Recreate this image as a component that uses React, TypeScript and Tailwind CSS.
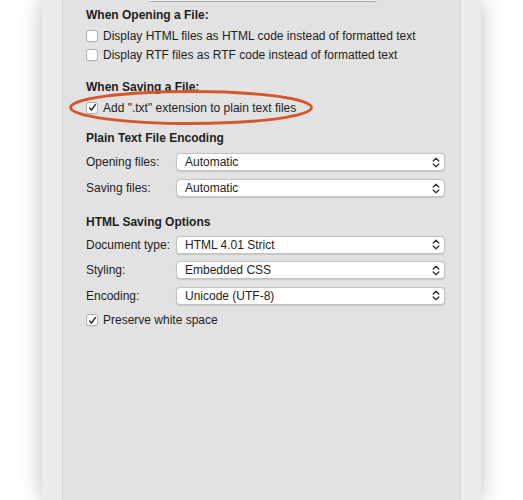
import React from "react";

function Checkbox({ checked }: { checked?: boolean }) {
  return (
    <span className="flex h-[12px] w-[12px] shrink-0 items-center justify-center rounded-[3px] border border-[#b0b0b0] bg-white shadow-[0_0.5px_0.5px_rgba(0,0,0,0.08)]">
      {checked && (
        <svg width="9" height="9" viewBox="0 0 9 9" fill="none">
          <path d="M1.6 4.9 L3.6 7 L7.4 1.6" stroke="#222" strokeWidth="1.4" strokeLinecap="round" strokeLinejoin="round" />
        </svg>
      )}
    </span>
  );
}

function CheckRow({ label, checked }: { label: string; checked?: boolean }) {
  return (
    <div className="flex h-[19px] items-center gap-[5px]">
      <Checkbox checked={checked} />
      <span className="whitespace-nowrap">{label}</span>
    </div>
  );
}

function Select({ label, value, tall }: { label: string; value: string; tall?: boolean }) {
  return (
    <div className={tall ? "flex h-[26px] items-center" : "flex h-[25.5px] items-center"}>
      <span className="w-[90px] shrink-0 whitespace-nowrap">{label}</span>
      <div className="flex h-[18px] w-[269px] items-center justify-between rounded-[4px] border border-[#c3c3c3] bg-white pl-[8px] pr-[4px] shadow-[0_0.5px_1px_rgba(0,0,0,0.12)]">
        <span>{value}</span>
        <svg width="8" height="11" viewBox="0 0 8 11" fill="none">
          <path d="M1.2 4 L4 1.2 L6.8 4 M1.2 7 L4 9.8 L6.8 7" stroke="#333" strokeWidth="1.3" strokeLinecap="round" strokeLinejoin="round" />
        </svg>
      </div>
    </div>
  );
}

function Heading({ children }: { children: React.ReactNode }) {
  return <div className="flex h-[18px] items-center font-bold">{children}</div>;
}

export default function App() {
  return (
    <div className="flex h-[500px] w-[523px] justify-center overflow-hidden bg-white">
      <div className="flex h-full w-[439px] bg-[#ececec] shadow-[0_0_20px_rgba(0,0,0,0.25)]">
        <div className="w-[20px] shrink-0" />
        <div
          className="relative w-[399px] shrink-0 border-x border-[#d6d6d6] bg-[#e2e2e2] pl-[23px] text-[12px] text-[#1e1e1e]"
          style={{ fontFamily: '"Liberation Sans", Arial, sans-serif' }}
        >
          <div className="ml-[62px] h-[2px] w-[229px] rounded-b-[3px] border-b border-[#a9a9a9] bg-[#f3f3f3]" />
          <div className="pt-[4px]">
            <Heading>When Opening a File:</Heading>
            <div className="mt-[2px]">
              <CheckRow label="Display HTML files as HTML code instead of formatted text" />
              <CheckRow label="Display RTF files as RTF code instead of formatted text" />
            </div>
            <div className="mt-[14px]">
              <Heading>When Saving a File:</Heading>
            </div>
            <div className="mt-[2px]">
              <CheckRow label='Add ".txt" extension to plain text files' checked />
            </div>
            <div className="mt-[12px]">
              <Heading>Plain Text File Encoding</Heading>
            </div>
            <div className="mt-[2px]">
              <Select label="Opening files:" value="Automatic" tall />
              <Select label="Saving files:" value="Automatic" tall />
            </div>
            <div className="mt-[12px]">
              <Heading>HTML Saving Options</Heading>
            </div>
            <div className="mt-[1px]">
              <Select label="Document type:" value="HTML 4.01 Strict" />
              <Select label="Styling:" value="Embedded CSS" />
              <Select label="Encoding:" value="Unicode (UTF-8)" />
            </div>
            <div className="mt-[2px]">
              <CheckRow label="Preserve white space" checked />
            </div>
          </div>
          <svg className="pointer-events-none absolute left-[5px] top-[89px]" width="246" height="37" viewBox="0 0 246 37" fill="none">
            <ellipse cx="123" cy="18.5" rx="120.5" ry="16" stroke="#d4572b" strokeWidth="2.8" />
          </svg>
        </div>
        <div className="flex-1" />
      </div>
    </div>
  );
}
